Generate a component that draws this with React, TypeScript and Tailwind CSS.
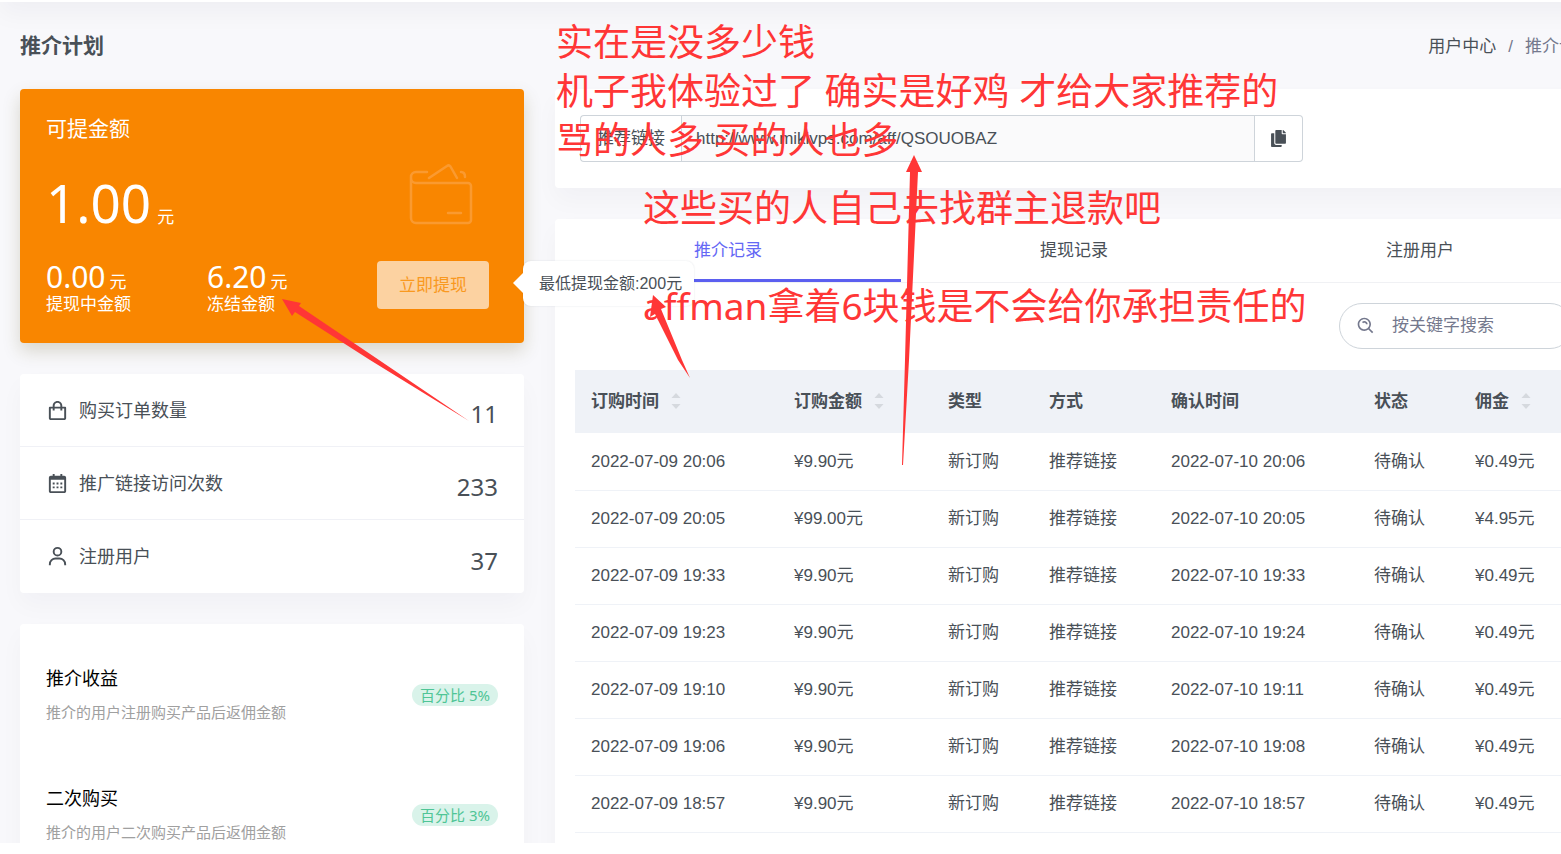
import { useState, type ReactNode } from 'react';
import { BiCalendar, BiSearchAlt, BiShoppingBag, BiUser } from 'react-icons/bi';
import { FaCopy } from 'react-icons/fa';
import type { IconType } from 'react-icons';

const STATS: { icon: IconType; label: string; value: number }[] = [
  { icon: BiShoppingBag, label: '购买订单数量', value: 11 },
  { icon: BiCalendar, label: '推广链接访问次数', value: 233 },
  { icon: BiUser, label: '注册用户', value: 37 },
];

const RATES = [
  { title: '推介收益', desc: '推介的用户注册购买产品后返佣金额', rate: '5%' },
  { title: '二次购买', desc: '推介的用户二次购买产品后返佣金额', rate: '3%' },
];

const TABS = ['推介记录', '提现记录', '注册用户'];

const COLUMNS: { label: string; width: string; sortable?: boolean }[] = [
  { label: '订购时间', width: 'w-[203px]', sortable: true },
  { label: '订购金额', width: 'w-[154px]', sortable: true },
  { label: '类型', width: 'w-[101px]' },
  { label: '方式', width: 'w-[122px]' },
  { label: '确认时间', width: 'w-[203px]' },
  { label: '状态', width: 'w-[101px]' },
  { label: '佣金', width: 'w-[114px]', sortable: true },
];

const ORDERS = [
  ['2022-07-09 20:06', '¥9.90元', '2022-07-10 20:06', '¥0.49元'],
  ['2022-07-09 20:05', '¥99.00元', '2022-07-10 20:05', '¥4.95元'],
  ['2022-07-09 19:33', '¥9.90元', '2022-07-10 19:33', '¥0.49元'],
  ['2022-07-09 19:23', '¥9.90元', '2022-07-10 19:24', '¥0.49元'],
  ['2022-07-09 19:10', '¥9.90元', '2022-07-10 19:11', '¥0.49元'],
  ['2022-07-09 19:06', '¥9.90元', '2022-07-10 19:08', '¥0.49元'],
  ['2022-07-09 18:57', '¥9.90元', '2022-07-10 18:57', '¥0.49元'],
];

function Card({ className = '', children }: { className?: string; children: ReactNode }) {
  return (
    <section className={`rounded bg-white shadow-[0_12px_24px_rgba(18,38,63,0.03)] ${className}`}>
      {children}
    </section>
  );
}

function WalletIcon() {
  return (
    <svg width="64" height="62" viewBox="0 0 64 62" fill="none" stroke="#fa9a30" strokeWidth="2.500" strokeLinecap="round" strokeLinejoin="round" aria-hidden>
      <path d="M18 9H7a5 5 0 0 0-5 5v41a5 5 0 0 0 5 5h52a3 3 0 0 0 3-3V23a3 3 0 0 0-3-3H7a5 5 0 0 1-5-5" />
      <path d="M20 15 38 3q2-1.500 3.500.5L48 15" />
      <path d="M52 9q4 0 4 5" />
      <path d="M39 50h13" />
    </svg>
  );
}

function SortIcon() {
  return (
    <svg width="10" height="18" viewBox="0 0 10 18" fill="#d5d9de" aria-hidden>
      <path d="M5 0 9.500 5H.5z" />
      <path d="M5 16 .5 11h9z" />
    </svg>
  );
}

function BalanceCard() {
  return (
    <section className="rounded bg-[#f98600] pt-6 pr-[35px] pb-7 pl-[26px] text-white shadow-[0_8px_18px_rgba(90,80,20,0.2)]">
      <h2 className="text-[21px] leading-[30px]">可提金额</h2>
      <div className="flex items-start justify-between pt-5 pr-4">
        <p className="flex items-baseline gap-[6px]">
          <span className="text-[53px] leading-[80px]">1.00</span>
          <span className="text-[17px] leading-none">元</span>
        </p>
        <WalletIcon />
      </div>
      <div className="grid grid-cols-[161px_1fr_auto] items-start pt-[18px]">
        {[['0.00', '提现中金额'], ['6.20', '冻结金额']].map(([value, label]) => (
          <div key={label}>
            <p className="flex items-baseline gap-1">
              <span className="text-[30px] leading-8">{value}</span>
              <span className="text-[17px] leading-none">元</span>
            </p>
            <p className="text-[17px] leading-[22px]">{label}</p>
          </div>
        ))}
        <div className="relative">
          <button type="button" className="h-12 w-28 rounded bg-[#fcd2a1] text-[17px] text-[#f9991f]">
            立即提现
          </button>
          <div role="tooltip" className="absolute top-0 left-full z-10 ml-[34px] flex h-[45px] items-center rounded-lg bg-white pr-3 pl-4 font-['Liberation_Sans','Noto_Sans_CJK_SC',sans-serif] text-[16px] whitespace-nowrap text-[#495057] shadow-[0_0_2px_rgba(18,38,63,0.12)]">
            <span className="absolute top-3 right-full border-y-10 border-r-10 border-y-transparent border-r-white" />
            最低提现金额:200元
          </div>
        </div>
      </div>
    </section>
  );
}

function StatsCard() {
  return (
    <Card>
      <ul>
        {STATS.map(({ icon: Icon, label, value }) => (
          <li key={label} className="flex h-[73px] items-center justify-between border-b border-[#f0f1f6] px-[26px] text-[#495057] last:border-b-0">
            <span className="flex items-center gap-[10px] text-[18px]">
              <Icon size={23} />
              {label}
            </span>
            <span className="pt-2 text-[24px]">{value}</span>
          </li>
        ))}
      </ul>
    </Card>
  );
}

function RatesCard() {
  return (
    <Card className="flex flex-col gap-[52px] px-[26px] pt-[37px] pb-12">
      {RATES.map(({ title, desc, rate }) => (
        <div key={title} className="flex items-center justify-between">
          <div className="leading-[34px]">
            <h3 className="text-[18px] text-black">{title}</h3>
            <p className="text-[15px] text-[#a0a0a0]">{desc}</p>
          </div>
          <span className="rounded-full bg-[#d9f3ea] px-2 text-[15px] leading-[22px] text-[#4fc596]">百分比 {rate}</span>
        </div>
      ))}
    </Card>
  );
}

function LinkCard() {
  return (
    <Card className="px-[25px] pt-[26px] pb-[26px]">
      <div className="flex h-[47px] w-full max-w-[723px] text-[17px] text-[#495057]">
        <label htmlFor="aff-link" className="flex items-center rounded-l border border-r-0 border-[#ced4da] px-4">
          推荐链接
        </label>
        <input
          id="aff-link"
          readOnly
          value="http://www.mikivps.com/aff/QSOUOBAZ"
          className="min-w-0 flex-1 border border-[#ced4da] bg-[#fafafb] px-[14px]"
        />
        <button type="button" aria-label="复制" className="flex w-12 items-center justify-center rounded-r border border-l-0 border-[#ced4da]">
          <FaCopy size={17} />
        </button>
      </div>
    </Card>
  );
}

function RecordsCard() {
  const [tab, setTab] = useState(TABS[0]);

  return (
    <Card>
      <div role="tablist" className="flex h-16 border-b border-[#f0f1f4]">
        {TABS.map((name) => (
          <button
            key={name}
            type="button"
            role="tab"
            aria-selected={tab === name}
            onClick={() => setTab(name)}
            className={`flex-1 border-b-3 pt-1 text-[17px] ${tab === name ? 'border-[#5b5ff0] text-[#6468f5]' : 'border-transparent text-[#495057]'}`}
          >
            {name}
          </button>
        ))}
      </div>
      <div className="px-5 pt-5 pb-10">
        <label className="mb-[21px] ml-auto flex h-[46px] w-[234px] items-center gap-4 rounded-full border border-[#ced4da] px-4 text-[#74788d]">
          <BiSearchAlt size={20} className="shrink-0" />
          <input
            type="search"
            aria-label="按关键字搜索"
            placeholder="按关键字搜索"
            className="w-full min-w-0 text-[17px] outline-none placeholder:text-[#74788d]"
          />
        </label>
        <table className="w-full table-fixed text-left text-[17px] text-[#495057]">
          <thead className="bg-[#eff2f7]">
            <tr className="h-[63px]">
              {COLUMNS.map(({ label, width, sortable }) => (
                <th key={label} className={`px-4 font-bold ${width}`}>
                  <span className="flex items-center gap-3">
                    {label}
                    {sortable && <SortIcon />}
                  </span>
                </th>
              ))}
            </tr>
          </thead>
          <tbody>
            {ORDERS.map(([ordered, amount, confirmed, commission]) => (
              <tr key={ordered} className="h-[57px] border-b border-[#eff2f7] whitespace-nowrap">
                <td className="px-4">{ordered}</td>
                <td className="px-4">{amount}</td>
                <td className="px-4">新订购</td>
                <td className="px-4">推荐链接</td>
                <td className="px-4">{confirmed}</td>
                <td className="px-4">待确认</td>
                <td className="px-4">{commission}</td>
              </tr>
            ))}
          </tbody>
        </table>
      </div>
    </Card>
  );
}

// Red notes and arrows that float over the page
function Annotations() {
  return (
    <div className="pointer-events-none absolute inset-0 z-20 overflow-hidden font-['Noto_Sans','Noto_Sans_CJK_SC',sans-serif] text-[37px] leading-[49px] whitespace-pre text-[#ff3636]">
      <p className="absolute top-[17px] left-[556px]">
        {'实在是没多少钱\n机子我体验过了 确实是好鸡 才给大家推荐的\n骂的人多 买的人也多'}
      </p>
      <p className="absolute top-[183px] left-[643px]">
        {'这些买的人自己去找群主退款吧\n\naffman拿着6块钱是不会给你承担责任的'}
      </p>
      <svg className="absolute top-0 left-0" width="1000" height="500" viewBox="0 0 1000 500" fill="#ff3636" aria-hidden>
        <path d="M282 299 301 303 299 306 379 360 469 421 370 360 295 312 292 316z" />
        <path d="M653 295 666 307 661 309 682 360 690 378 678 360 655 314 650 317z" />
        <path d="M914 155 922 172 918 172 909 360 903 465 902 465 905 360 910 172 906 172z" />
      </svg>
    </div>
  );
}

export default function App() {
  return (
    <div className="relative flex h-screen flex-col overflow-hidden bg-white font-['Liberation_Sans','Noto_Sans_CJK_SC',sans-serif]">
      <div className="flex-1 overflow-hidden bg-[#f8f8fb]">
        {/* the page is a little wider than the window and runs off its right side */}
        <div className="flex w-[calc(100%+52px)] flex-col">
          {/* top bar, scrolled almost out of view */}
          <div className="-mt-[68px] h-[70px] bg-white shadow-[0_12px_24px_rgba(18,38,63,0.04)]" />
          <div className="px-5">
            <header className="flex h-[87px] items-center justify-between">
              <h1 className="text-[21px] font-bold text-[#495057]">推介计划</h1>
              <nav aria-label="breadcrumb" className="flex gap-3 pt-0.5 text-[17px] text-[#74788d]">
                <a href="#" className="text-[#495057]">用户中心</a>
                <span>/</span>
                <span>推介计划</span>
              </nav>
            </header>
            <main className="grid grid-cols-[504fr_1038fr] items-start gap-[31px]">
              <div className="relative z-10 flex flex-col gap-[31px] font-['Noto_Sans','Noto_Sans_CJK_SC',sans-serif]">
                <BalanceCard />
                <StatsCard />
                <RatesCard />
              </div>
              <div className="flex min-w-0 flex-col gap-[31px]">
                <LinkCard />
                <RecordsCard />
              </div>
            </main>
          </div>
        </div>
      </div>
      <div className="h-[11px] shrink-0" />
      <Annotations />
    </div>
  );
}
